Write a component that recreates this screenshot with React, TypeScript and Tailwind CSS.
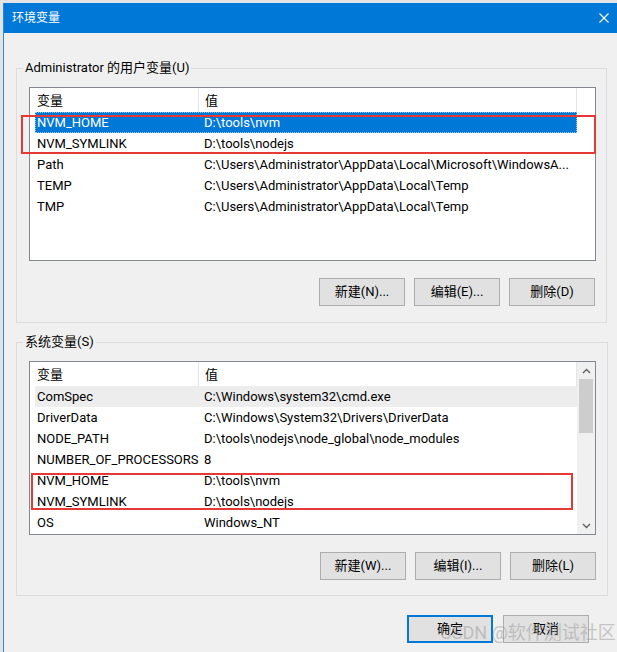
import React from "react";

type Row = { name: string; value: string };

const userRows: Row[] = [
  { name: "NVM_HOME", value: "D:\\tools\\nvm" },
  { name: "NVM_SYMLINK", value: "D:\\tools\\nodejs" },
  { name: "Path", value: "C:\\Users\\Administrator\\AppData\\Local\\Microsoft\\WindowsA..." },
  { name: "TEMP", value: "C:\\Users\\Administrator\\AppData\\Local\\Temp" },
  { name: "TMP", value: "C:\\Users\\Administrator\\AppData\\Local\\Temp" },
];

const systemRows: Row[] = [
  { name: "ComSpec", value: "C:\\Windows\\system32\\cmd.exe" },
  { name: "DriverData", value: "C:\\Windows\\System32\\Drivers\\DriverData" },
  { name: "NODE_PATH", value: "D:\\tools\\nodejs\\node_global\\node_modules" },
  { name: "NUMBER_OF_PROCESSORS", value: "8" },
  { name: "NVM_HOME", value: "D:\\tools\\nvm" },
  { name: "NVM_SYMLINK", value: "D:\\tools\\nodejs" },
  { name: "OS", value: "Windows_NT" },
];

function ListHeader() {
  return (
    <div className="flex h-[24px] shrink-0 items-center bg-white">
      <div className="flex h-full w-[169px] items-center border-r border-[#e5e5e5] pl-[7px]">变量</div>
      <div className="flex h-full w-[378px] items-center border-r border-[#e5e5e5] pl-[6px]">值</div>
    </div>
  );
}

function ListRow({ row, state }: { row: Row; state?: "active" | "inactive" }) {
  let cls = "border border-transparent";
  if (state === "active") cls = "border border-dotted border-[#9fc6ee] bg-[#0078d7] text-white";
  if (state === "inactive") cls = "border border-transparent bg-[#ededed]";
  return (
    <div className="flex h-[21px] shrink-0 pl-[5px]">
      <div className={`flex w-[542px] items-center whitespace-nowrap leading-[19px] ${cls}`}>
        <div className="w-[168px] overflow-hidden pl-[1px]">{row.name}</div>
        <div className="flex-1 overflow-hidden">{row.value}</div>
      </div>
    </div>
  );
}

function Chevron({ up }: { up?: boolean }) {
  return (
    <svg width="9" height="6" viewBox="0 0 9 6" className="block">
      <path
        d={up ? "M1 5 L4.5 1.5 L8 5" : "M1 1 L4.5 4.5 L8 1"}
        fill="none"
        stroke="#606060"
        strokeWidth="1.4"
      />
    </svg>
  );
}

function WinButton({ label, primary }: { label: string; primary?: boolean }) {
  return (
    <button
      className={`flex h-[28px] w-[86px] items-center justify-center bg-[#e1e1e1] leading-[18px] ${
        primary ? "border-2 border-[#0078d7]" : "border border-[#adadad]"
      }`}
    >
      {label}
    </button>
  );
}

export default function App() {
  return (
    <div
      className="relative h-[652px] w-[617px] overflow-hidden bg-[#e4e4e4] pl-[3px] pt-[3px] text-[13px] leading-none text-black"
      style={{ fontFamily: 'Roboto, "Noto Sans CJK SC", sans-serif' }}
    >
      <div className="flex h-full flex-col border-l border-[#2b88d8] bg-[#f0f0f0]">
        {/* 标题栏 */}
        <div className="flex h-[30px] shrink-0 items-center justify-between bg-[#0078d7] pl-[8px] pr-[8px] text-[12px] text-white">
          <span>环境变量</span>
          <svg width="10" height="10" viewBox="0 0 10 10">
            <path d="M0.5 0.5 L9.5 9.5 M9.5 0.5 L0.5 9.5" stroke="#fff" strokeWidth="1.1" />
          </svg>
        </div>

        {/* 用户变量 */}
        <fieldset className="ml-[12px] mt-[26px] w-[591px] border border-[#dcdcdc] p-0 pb-[16px]">
          <legend className="ml-[6px] px-[2px] leading-[18px]">Administrator 的用户变量(U)</legend>
          <div className="ml-[12px] mt-[10px] flex h-[174px] w-[567px] flex-col overflow-hidden border border-[#828790] bg-white">
            <ListHeader />
            {userRows.map((r, i) => (
              <ListRow key={r.name} row={r} state={i === 0 ? "active" : undefined} />
            ))}
          </div>
          <div className="mt-[17px] flex justify-end gap-[9px] pr-[11px]">
            <WinButton label="新建(N)..." />
            <WinButton label="编辑(E)..." />
            <WinButton label="删除(D)" />
          </div>
        </fieldset>

        {/* 系统变量 */}
        <fieldset className="ml-[12px] mt-[10px] w-[592px] border border-[#dcdcdc] p-0 pb-[15px]">
          <legend className="ml-[6px] px-[2px] leading-[18px]">系统变量(S)</legend>
          <div className="ml-[12px] mt-[10px] flex h-[174px] w-[567px] overflow-hidden border border-[#828790] bg-white">
            <div className="flex flex-1 flex-col overflow-hidden">
              <ListHeader />
              {systemRows.map((r, i) => (
                <ListRow key={r.name} row={r} state={i === 0 ? "inactive" : undefined} />
              ))}
            </div>
            <div className="flex w-[18px] shrink-0 flex-col items-center bg-[#f0f0f0]">
              <div className="flex h-[17px] w-full items-center justify-center">
                <Chevron up />
              </div>
              <div className="h-[54px] w-[14px] bg-[#cdcdcd]" />
              <div className="flex-1" />
              <div className="flex h-[17px] w-full items-center justify-center">
                <Chevron />
              </div>
            </div>
          </div>
          <div className="mt-[17px] flex justify-end gap-[9px] pr-[11px]">
            <WinButton label="新建(W)..." />
            <WinButton label="编辑(I)..." />
            <WinButton label="删除(L)" />
          </div>
        </fieldset>

        {/* 确定 / 取消 */}
        <div className="mr-[28px] mt-[19px] flex justify-end gap-[10px]">
          <WinButton label="确定" primary />
          <WinButton label="取消" />
        </div>
      </div>

      {/* 标注红框 */}
      <div className="pointer-events-none absolute left-[21px] top-[115px] h-[39px] w-[575px] border-2 border-[#e53935]" />
      <div className="pointer-events-none absolute left-[31px] top-[473px] h-[37px] w-[542px] border-2 border-[#e53935]" />

      {/* 水印 */}
      <div className="pointer-events-none absolute left-[440px] top-[621px] whitespace-nowrap text-[18px] leading-[24px] text-[#9a9a9a] opacity-50">
        CSDN @软件测试社区
      </div>
    </div>
  );
}
